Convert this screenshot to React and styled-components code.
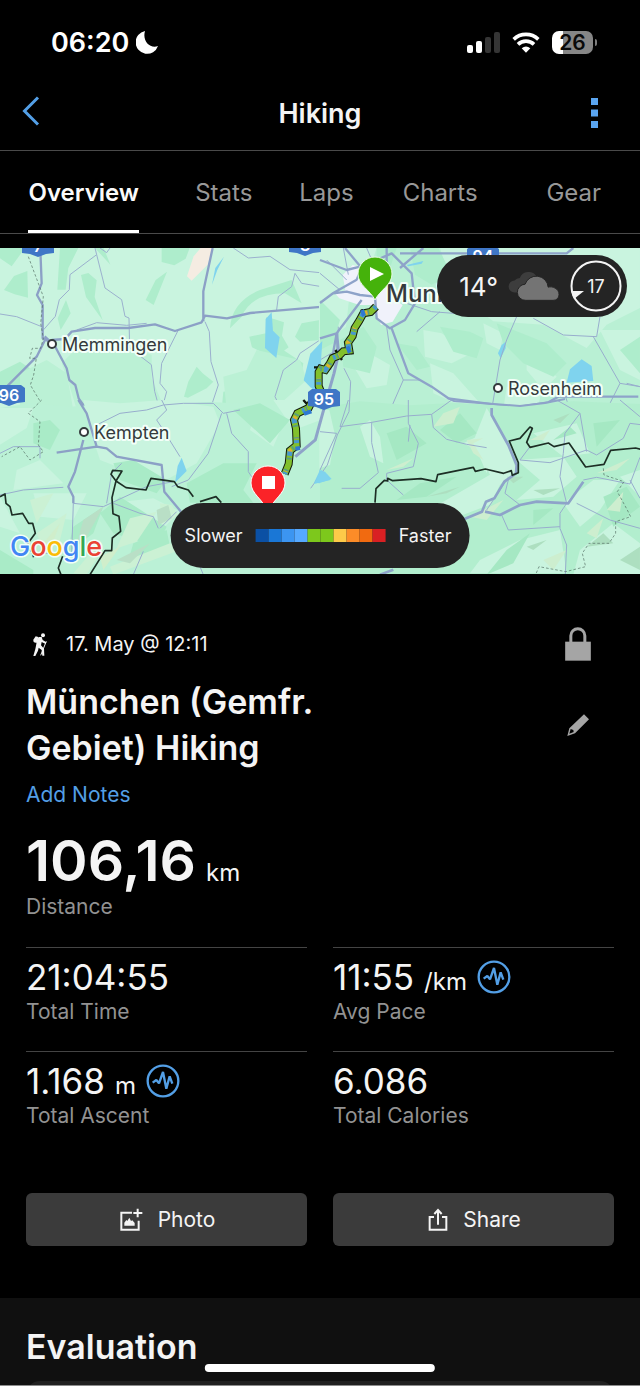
import React from "react";
import styled, { createGlobalStyle } from "styled-components";

const GlobalStyle = createGlobalStyle`
  *, *::before, *::after { box-sizing: border-box; }
  body { margin: 0; background: #000; }
  button { font: inherit; color: inherit; background: none; border: 0; padding: 0; cursor: pointer; }
  svg { display: block; }
`;

const Page = styled.div`
  position: relative;
  min-height: 100vh;
  display: flex;
  flex-direction: column;
  background: #000;
  color: #f4f4f4;
  font-family: Inter, "Liberation Sans", sans-serif;
  font-size: 20px;
`;

/* ---------- status bar and header ---------- */

const StatusBar = styled.div`
  height: 76px;
  padding: 8px 43px 0 51px;
  display: flex;
  align-items: center;
  justify-content: space-between;
`;

const StatusGroup = styled.div`
  display: flex;
  align-items: center;
  gap: ${(p) => p.$gap}px;
`;

const Clock = styled.time`
  font-size: 27px;
  font-weight: 600;
  color: #fff;
`;

const Battery = styled.div`
  display: flex;
  align-items: center;
  gap: 2px;
  &::after {
    content: "";
    width: 2px;
    height: 7px;
    border-radius: 0 2px 2px 0;
    background: #7d7d7d;
  }
`;

const BatteryLevel = styled.div`
  width: 41px;
  height: 23px;
  border-radius: 7px;
  display: grid;
  place-items: center;
  background: linear-gradient(to right, #fff 27%, #868686 27%);
  color: #0a0a0a;
  font-size: 21px;
  line-height: 23px;
  font-weight: 600;
`;

const Header = styled.header`
  height: 75px;
  padding: 0 22px;
  display: grid;
  grid-template-columns: 48px 1fr 48px;
  align-items: center;
  border-bottom: 1px solid #4a4a4a;
`;

const HeaderTitle = styled.h1`
  margin: 0;
  text-align: center;
  font-size: 27px;
  font-weight: 600;
`;

const IconButton = styled.button`
  display: flex;
  align-items: center;
  justify-content: ${(p) => (p.$end ? "flex-end" : "flex-start")};
  min-width: 32px;
  min-height: 34px;
`;

const BackButton = styled(IconButton)`
  padding-bottom: 4px;
`;

const MoreButton = styled(IconButton)`
  padding-right: 20px;
`;

const Tabs = styled.nav`
  height: 83px;
  display: grid;
  grid-template-columns: 168fr 113fr 93fr 135fr 133fr;
  justify-items: center;
  border-bottom: 1px solid #4a4a4a;
`;

const Tab = styled.button`
  height: 82px;
  font-size: 24px;
  font-weight: ${(p) => (p.$active ? 600 : 400)};
  color: ${(p) => (p.$active ? "#fafafa" : "#989898")};
  box-shadow: ${(p) => (p.$active ? "inset 0 -3px #fff" : "none")};
`;

/* ---------- map ---------- */

const MapPanel = styled.section`
  position: relative;
  margin-top: 14px;
  height: 326px;
  overflow: hidden;
  background: #bdf1d6;
`;

const MapCanvas = styled.svg`
  width: 100%;
  height: 100%;
`;

const PlaceName = styled.text`
  font-size: ${(p) => p.$size}px;
  font-weight: ${(p) => p.$weight || 400};
  fill: #343a3c;
  stroke: #f2fff8;
  stroke-width: 4px;
  stroke-linejoin: round;
  paint-order: stroke;
`;

const RoadNumber = styled.text`
  font-size: 16px;
  font-weight: 600;
  fill: #fff;
  text-anchor: middle;
`;

const GoogleMark = styled.text`
  font-family: Inter, sans-serif;
  font-size: 27px;
  font-weight: 500;
  stroke: #f2fff8;
  stroke-width: 3px;
  stroke-linejoin: round;
  paint-order: stroke;
`;

const WeatherPill = styled.div`
  position: absolute;
  top: 7px;
  right: 13px;
  height: 62px;
  padding: 0 5px 0 22px;
  display: flex;
  align-items: center;
  gap: 10px;
  border-radius: 31px;
  background: #242424;
`;

const Temperature = styled.span`
  font-size: 26px;
`;

const Wind = styled.div`
  display: grid;
  place-items: center;
  font-size: 18px;
  > * { grid-area: 1 / 1; }
`;

const PaceLegend = styled.div`
  position: absolute;
  bottom: 6px;
  left: 50%;
  transform: translateX(-50%);
  height: 65px;
  padding: 0 18px 0 14px;
  display: flex;
  align-items: center;
  gap: 13px;
  border-radius: 33px;
  background: #242424;
  font-size: 18px;
`;

const Scale = styled.div`
  display: flex;
`;

const Swatch = styled.i`
  width: 13px;
  height: 13px;
  background: ${(p) => p.$color};
`;

/* ---------- summary ---------- */

const Summary = styled.main`
  padding: 53px 26px 52px;
`;

const MetaRow = styled.div`
  height: 34px;
  display: flex;
  align-items: center;
  padding: 0 23px 0 6px;
`;

const DateText = styled.time`
  flex: 1;
  margin-left: 18px;
  font-size: 20px;
`;

const TitleRow = styled.div`
  margin-top: 18px;
  padding-right: 23px;
  display: flex;
  align-items: center;
  justify-content: space-between;
`;

const ActivityTitle = styled.h2`
  margin: 0;
  max-width: 340px;
  font-size: 34px;
  line-height: 46px;
  font-weight: 600;
`;

const NotesLink = styled.a`
  display: block;
  width: fit-content;
  margin-top: 10px;
  font-size: 21px;
  line-height: 28px;
  color: #539fe6;
  text-decoration: none;
`;

const Distance = styled.div`
  margin-top: 22px;
  margin-bottom: 26px;
`;

const DistanceValue = styled.div`
  display: flex;
  align-items: baseline;
  gap: 10px;
  height: 60px;
  font-size: 57px;
  line-height: 60px;
  font-weight: 600;
`;

const Unit = styled.span`
  font-size: 24px;
  line-height: 24px;
  font-weight: 400;
`;

const StatLabel = styled.div`
  margin-top: ${(p) => p.$gap || 1}px;
  font-size: 21px;
  line-height: 28px;
  color: #929292;
`;

const StatGrid = styled.div`
  display: grid;
  grid-template-columns: 1fr 1fr;
  column-gap: 26px;
`;

const StatCell = styled.div`
  height: 104px;
  padding-top: 9px;
  border-top: 1px solid #444;
`;

const StatLine = styled.div`
  display: flex;
  align-items: center;
  gap: 10px;
  height: 40px;
`;

const StatValue = styled.span`
  display: flex;
  align-items: baseline;
  gap: 10px;
  font-size: 35px;
  line-height: 40px;
`;

const Actions = styled.div`
  display: grid;
  grid-template-columns: 1fr 1fr;
  gap: 26px;
  margin-top: 38px;
`;

const ActionButton = styled.button`
  height: 53px;
  display: flex;
  align-items: center;
  justify-content: center;
  gap: 15px;
  padding-left: 2px;
  border-radius: 6px;
  background: #3b3b3b;
  font-size: 21px;
`;

/* ---------- evaluation ---------- */

const EvaluationSection = styled.section`
  flex: 1;
  padding: 26px 26px 0;
  background: #101010;
  border-bottom: 1px solid #8c8c8c;
`;

const SectionTitle = styled.h2`
  margin: 0 0 11px;
  font-size: 34px;
  line-height: 46px;
  font-weight: 600;
`;

const CardEdge = styled.div`
  height: 4px;
  overflow: hidden;
  &::before {
    content: "";
    display: block;
    height: 28px;
    border-radius: 14px;
    background: #202020;
  }
`;

const HomeIndicator = styled.div`
  position: absolute;
  bottom: 14px;
  left: 50%;
  transform: translateX(-50%);
  width: 36%;
  height: 8px;
  border-radius: 4px;
  background: #fff;
`;

/* ---------- icons ---------- */

const MoonIcon = () => (
  <svg width="23" height="24" viewBox="0 0 23 24">
    <path d="M9 1A11.500 11.500 0 1 0 22 16C14 19 6 11 9 1Z" fill="#fff" />
  </svg>
);

const SignalIcon = () => (
  <svg width="33" height="21" viewBox="0 0 33 21">
    <rect x="0" y="13" width="6" height="8" rx="2" fill="#fff" />
    <rect x="9" y="9" width="6" height="12" rx="2" fill="#fff" />
    <rect x="18" y="5" width="6" height="16" rx="2" fill="#353535" />
    <rect x="27" y="0" width="6" height="21" rx="2" fill="#353535" />
  </svg>
);

const WifiIcon = () => (
  <svg width="28" height="21" viewBox="0 0 84 63">
    <g fill="none" stroke="#fff" strokeWidth="11">
      <path d="M5 22A54 54 0 0 1 79 22" />
      <path d="M18 37A35 35 0 0 1 66 37" />
    </g>
    <path d="M29 49Q42 38 55 49L42 62Z" fill="#fff" />
  </svg>
);

const BackIcon = () => (
  <svg width="18" height="30" viewBox="0 0 18 30">
    <path d="M16 1.500 2.500 15 16 28.500" fill="none" stroke="#539fe6" strokeWidth="3" />
  </svg>
);

const MoreIcon = () => (
  <svg width="7" height="30" viewBox="0 0 7 30" fill="#5aa5f0">
    <rect width="7" height="7" />
    <rect y="11.500" width="7" height="7" />
    <rect y="23" width="7" height="7" />
  </svg>
);

const HikerIcon = () => (
  <svg width="16" height="24" viewBox="94 64 46 72">
    <circle cx="126" cy="74" r="6" fill="#f4f4f4" />
    <path d="M104 77l8 2-5 18-8-2q-4-3-1-9z" fill="#f4f4f4" />
    <path d="M114 79h8l3 9 11 7-2 5-12-6-2 10 9 10 1 21h-6l-2-17-9-7-2 9-8 16h-6l6-21 2-10 4-22z" fill="#f4f4f4" />
    <path d="M136 92l-17 42" stroke="#f4f4f4" strokeWidth="3" />
  </svg>
);

const LockIcon = () => (
  <svg width="26" height="34" viewBox="735 50 77 102">
    <rect x="735" y="94" width="77" height="57" fill="#a5a5a5" />
    <path d="M752 96V76a21 21 0 0 1 42 0v20" fill="none" stroke="#a5a5a5" strokeWidth="9" />
  </svg>
);

const PencilIcon = () => (
  <svg width="26" height="22" viewBox="734 309 78 66">
    <path fillRule="evenodd" d="M791 310l15 15-42 42-23 8 6-23zM751 354l-4 14 13-5-1-6z" fill="#a5a5a5" />
  </svg>
);

const PulseIcon = () => (
  <svg width="34" height="34" viewBox="-51 -51 102 102" fill="none" stroke="#539fe6">
    <circle r="46" strokeWidth="7" />
    <path d="M-31 5-20-3-12 7 0-27 10 23 20-14 28 8" strokeWidth="7" strokeLinejoin="bevel" />
  </svg>
);

const PhotoIcon = () => (
  <svg width="23" height="24" viewBox="32 471 69 72">
    <path d="M68 485H36v51h52v-27M85 473v26M72 486h27" fill="none" stroke="#f4f4f4" strokeWidth="6" />
    <path d="M45 524v-9l6-8 3 3 6-10 5 10 4-2 7 8v8z" fill="#f4f4f4" />
  </svg>
);

const ShareIcon = () => (
  <svg width="20" height="24" viewBox="0 0 60 72" fill="none" stroke="#f4f4f4" strokeWidth="6">
    <path d="M18 27H5v38h50V27H42M30 50V8M19 18 30 6l11 12" />
  </svg>
);

const CloudsIcon = () => (
  <svg width="52" height="29" viewBox="567 94 156 88">
    <path d="M586 156a18 18 0 0 1 0-36 20 20 0 0 1 16-8 28 28 0 0 1 52-1v45z" fill="#3d3d3d" />
    <path d="M620 180a24 24 0 0 1-2-49 36 36 0 0 1 70 9c12-4 33 4 33 22 0 12-8 18-18 18z" fill="#747474" stroke="#242424" strokeWidth="3" />
  </svg>
);

const WindDial = () => (
  <svg width="52" height="52" viewBox="0 0 52 52">
    <circle cx="26" cy="26" r="24.500" fill="none" stroke="#f4f4f4" strokeWidth="2" />
    <path d="M1 31h13L4 39z" fill="#f4f4f4" />
  </svg>
);

/* ---------- map artwork ---------- */

const FOREST = "#aeedcc";
const FIELD = "#c9f4df";
const WATER = "#7fd3ee";

const NorthWest = () => (
  <g transform="translate(0 -8) scale(.3333)">
    <path fill={FIELD} d="M0 0H970V540H0z" />
    <g fill={FOREST}>
      <path d="M0 24h75l-40 55L0 55zM12 150l30-42 40-15 2 80-40-10zM180 24h55l-30 60-8 65-25 0zM243 105l22-6 25 22-6 50 24 70-50-70zM173 235l25-55 14 40-30 50zM437 180l30-60 34-25-40 100zM485 24h84l-12 32-34 20-38-10zM0 395l60-30 30 20-50 90-40-20zM565 425l25-45 18 20 32 25-20 20-56 28-12-3zM748 290l50-10 0-48 24 5 30 10-6 40 20 35-40 30-30-10-40-20zM905 250l55-10v60l-60 5-15-15zM670 455l35-5 35 35 10 25h-85zM820 360l30-30 60 40-5 30zM285 24h26l20 50z" />
      <path d="M690 265q5-80 90-115l95-30 30 70-50-30q-100 0-130 70z" />
    </g>
    <path fill="#bbf1d5" d="M185 370l50-50 150-5 70 30 0 70 30 70-20 40H235l-30-100zM670 410l70-20 30-60 130 30 20 60-100 90H680zM60 400l80-40 60 40 20 110H60z" />
    <path fill="#f5ece2" d="M602 24h36l-15 50-48 48-14-13 20-60z" />
    <g fill={WATER}>
      <path d="M797 237l18-20 4 55 20 20-10 62-34-30zM930 370l30-30v130l-48-50zM672 50l-20 40-16 44 10-50z" />
    </g>
    <g fill="none" stroke="#9bb0ce" strokeWidth="3">
      <path d="M285 24l5 20-80 60-2 45-30 30-12 50-35 40M0 222l50 8 80 32M290 44l25 100 50 35 10 50 12 5 2 90 65 50 10 80 20 74M535 270l-50 100-5 60 20 25-15 55M615 245l13 30 5 90 22 70-20 60-180 12-80 20M700 24l45 30 65-5 60 40 100 10M885 100l-10 40-40 30-5 40M885 100l20 30 60 10M960 300l-60 40-10 20-40 30-25 80 20 40M300 24l20 14 10-14M230 270l60-22 90 8 60-6" />
    </g>
    <g fill="none" stroke="#8ca0c6" strokeWidth="7" strokeLinejoin="round">
      <path d="M121 30l4 100-14 35 17 30v100l28 14-22-20M135 300l-25 50-110 110M155 300l45 85 8 35 18 15 10 40 28 40M155 300l40-3 20-22 70-11h100l80-11 60 20 80-26 10-20 66 8 70-16 160-14 60-5M638 24l-28 130v90" />
    </g>
    <path d="M85 50l45 120-8 80 8 45-8 30-25 0-8 30 20 0-8 50-10 30 30 50" fill="none" stroke="#526b60" strokeWidth="2" strokeDasharray="8 6" />
  </g>
);

const NorthEast = () => (
  <g transform="translate(320 -8) scale(.3333)">
    <path fill="#b9f0d4" d="M0 0H960V540H0z" />
    <g fill={FIELD}>
      <path d="M-2 0h180l-30 90-60 80-10 90-80 60v60l-2 0zM360 24h600v180l-100 50-60 70-130-70-150-10-120-90zM80 345l60-10 70 40-10 60-60 10zM310 270l55 10 90 60-60 30-80-20zM330 370l70 30 80 90-50 10-90-40zM840 270h120v150l-60-30zM490 250l60 30-10 50-40-20zM620 320l90 90-40 40-50-60z" />
      <path d="M560 440h110l-20 70H550z" />
    </g>
    <g fill={FOREST}>
      <path d="M170 24h60l-20 60-40-20zM270 24h85l40 80-60 30-50-30zM360 260l90 15 40 20-20 60-70-20zM530 250l150 60 60 60-40 40-90-40-60-60zM750 110l60 30 0 40-80 30zM0 180l60 60-20 70-40 20zM230 310l60 10 40 60-40 10zM900 330l60-40v110zM60 300l70-40 40 60-20 80-80-20z" />
    </g>
    <path fill="#f0f2fb" d="M68 105l30-30 110 30 10 70 30 20-30 50-35 10-25-60-40 0-60-20-12-14 30-10z" />
    <g fill={WATER}>
      <path d="M785 358l30 20 5 45-80 5 10-40zM545 315l12-10 0 20-15 30-8-15zM260 75l50-12-5 8-40 8z" />
    </g>
    <g fill="none" stroke="#98adcd" strokeWidth="3">
      <path d="M200 260l10 70 40 90-35 80M250 420l50 0M590 230l-30 70-20 60-10 60-15 90M640 235l90 50 100 5 10-60M820 290l80 140 60 10M900 430l-30 60M0 100l60 50M20 60l60 60M70 24l15 80M360 215l-70 60M245 185l90 30 130 10 70-5M0 360l50-30 5-70M920 430l40 10M140 24l30 70M730 450l20 60M0 495l60 5" />
    </g>
    <g fill="none" stroke="#8ea3c9" strokeWidth="7" strokeLinejoin="round">
      <path d="M75 24l50 60-15 35-70 40-40 30M0 60l80 30 40-10M125 80l90-40 60 60 10 90-30 50-45 25-40-30-5-65-45-5-40-10-40 5M200 24l0 80M310 24l-70 60M125 180l-75 100-20 110M50 280l-50 15M215 265l50 135 70 40 50 35 90 12 110 15 100-15 30-17h240M240 40h500l20-16" />
    </g>
  </g>
);

const SouthWest = () => (
  <g transform="translate(0 152) scale(.3333)">
    <path fill="#bbf1d6" d="M0 24l90-14 120 10 130-10 150 6 140-10 160 8 170 0V540H0z" />
    <g fill={FIELD}>
      <path d="M250 0l110 10 130-10 150 20 20 50-70 120-110 60-180-70-30-90zM0 24h100l-20 60-80 50zM50 210l70-30 70 70-150 20zM760 60l90 10-30 70-70-50zM820 0h142v60l-80 30z" />
      <path d="M370 305l90-10 80 40-50 50-110-40zM100 280l160 0-40 80-100-10zM0 290l60 110-60-20z" />
    </g>
    <g fill="#a9ebc7">
      <path d="M100 70l50-10 30 30-30 60-50-20zM340 190l60-10 100 60-30 40-110-40zM560 250l110-60 100 0-40 80 30 38H570zM0 450l100 60 0 14H0zM300 340l60-50 140 90-30 60-130-40zM700 30l80-20 90 50-60 70z" />
      <path d="M220 380l90-60-30 80-80 60zM400 430l100-40 10 50-130 60z" />
    </g>
    <g fill="#cbf1d4">
      <path d="M330 500l180-70 30 20-200 74zM220 520l60-70 20 10-40 64zM480 310l35 5 20 30-50 30zM390 355l80-20-60 90-60 20zM90 300l70-20-50 90zM110 400l90-60-20 80-50 30z" />
    </g>
    <path fill="#b9dfc6" d="M470 330l35-15 10 40-40 20zM250 360l60-40-50 90-30 20zM350 480l100-50-60 60z" />
    <path fill="#d0eecb" d="M130 430l50-60-30 80zM300 470l60-30-50 70z" />
    <g fill={WATER}>
      <path d="M545 173l15 40-35 35 8-50zM960 210v40l-18-2z" />
    </g>
    <g fill="none" stroke="#98adcd" strokeWidth="3">
      <path d="M485 0l15 30-30 30 20 30 50 80M290 75l70-35 80-10 50-15 60-5 90 0 30 30 50-10M665 40l-40 120-60 80-50 20M680 40l15 60 50 55 0 60 20 30M0 285l70-15 120-8M220 310l90 10 130-60 80-15M220 310l-5 150M340 310l80 30 40 10 15 35M320 310l15-90 30-30M0 160l40-20 80 0 0 35M480 385l50-50M400 524l30-70M600 500l10 24M120 460l60 0" />
    </g>
    <g fill="none" stroke="#8ca0c6" strokeWidth="7" strokeLinejoin="round">
      <path d="M235 0l25 40 30 100-120 18M290 140l30 5 30 25 135 25 8 80 50 60M250 120l-25 95-20 45 15 30v20" />
    </g>
    <path d="M125 0l-40 40 35 25-5 70 15 20-40 25-30-40-55 30" fill="none" stroke="#526b60" strokeWidth="2" strokeDasharray="8 6" />
    <g fill="none" stroke="#1d2e25" strokeWidth="5" strokeLinejoin="round">
      <path d="M0 290l15-8 3 28 12 10 6 25 32-5 18 30 12 0 8 30-30 40 20 15 5 17M183 524l-8-20 13-35M270 524l45-72 20 0 2-38 25-20-5-45-18-8-3-48 12-50-15-20 5-12 28 2-18 30 30 20 60 7 15-35 70 10 10 15 32 10 15 20M600 305l48-15 16 18" />
    </g>
  </g>
);

const SouthEast = () => (
  <g transform="translate(320 152) scale(.3333)">
    <path fill="#b2eece" d="M0 24l120-20 150 12 140-8 160 10 190-14 200 8V540H0z" />
    <g fill={FIELD}>
      <path d="M-2 30l30 0 17 75-15 90-32 10zM120 80l30-20 30 50 10 80-40-20zM430 130l40-20 50 50-20 60-30-70zM500 24l60 100 30 90-50 40-30 60-80 30-110-10 190-110-50-100zM590 180l140-10 40 60-70 60-110 10 70-60zM730 310l90-70 80 0-60 90-60 50zM640 100l130-30 40 90-80 10z" />
      <path d="M480 480l120-60 120-30 20 130H450zM780 450l100-80 80 60v94H760zM900 230l60-20v80z" />
    </g>
    <g fill="#a5e8c3">
      <path d="M200 100l60-20 60 50-90 50zM360 90l60-50 50 60-60 30zM300 250l110-20-90 60-90 10zM560 450l70-50-50 90-80 34zM820 70l80-10-70 80zM640 330l60-5-60 50zM850 290l70-30 40 60-80 60zM700 120l50-40 20 20z" />
    </g>
    <g fill="#cdeecf">
      <path d="M370 40l50-20-20 50-60 10zM200 210l80-35-30 25zM440 120l50-5-30 15 30 50-30-20zM630 120l60-30-20 30zM830 220l100-45-40 35zM860 330l50-55-10 60zM800 400l50-45-20 60zM670 480l70-30-40 60zM450 350l100-50-50 60z" />
    </g>
    <g fill="#addfc0">
      <path d="M320 290l100-30-40 20zM640 270l80-5-50 20zM560 230l50 0-30 20zM700 60l50-20-30 30zM800 440l50-40 30 30zM900 480l60-40v70zM620 440l60-20-40 30z" />
    </g>
    <path fill={WATER} d="M-2 210l17 5 20 22-37 12z" />
    <g fill="none" stroke="#98adcd" strokeWidth="3">
      <path d="M0 95l50 5L0 210M85 0L60 80l90-12 110-20 75-5 60-43M155 68l0 60 20 90-55 47H65M265 0v70l30 60-15 70-80 20 0 20 50 45M270 75l-5 50M335 43l5 40 40 35 60 15 60 10M630 140l-30 40 90 8 110-38 30 15 80-50 20-45 40 5M780 40l-45 60 -5 60-10 70 20 80-20 30 0 45 20 50-5 110M710 0l70 40 20 115M565 240l-10 40 45 35M770 310l100 50 90 25M545 345l20 45 155-10M790 240l40-8 100 20 30-80M900 0l60 50M500 330l60-90M930 240l30 55" />
    </g>
    <g fill="none" stroke="#8ea3c9" strokeWidth="8" strokeLinejoin="round">
      <path d="M515 24l0 21 50 90 25 60-2 25-35 25-30 50-25 10-12 30-60 25M495 335l45 10 60-30 50-10 95 5 45-65M180 524l40-15" />
    </g>
    <path d="M850 205l2 20 60 20-20 30 30 55 10 20-45 15 0 35-20 30-60 0-20 30 10 40-60 15-80-15-10 24-50 0" fill="none" stroke="#526b60" strokeWidth="2" strokeDasharray="8 6" />
    <path d="M165 308l3-42 25-25 10 2 0-8 15 7 85-6 45 9 5-21 107-22 6 12 30-7 55 13 23-8 3 14 18-8 0-30-27-65 32-8 30-34 7 4-17 42 10 15 55-13 17 11 45-11 50 72 55-8 20-42 75-7 30 8" fill="none" stroke="#1d2e25" strokeWidth="5" strokeLinejoin="round" />
  </g>
);

const TRACK =
  "M318 50l-16 16-22 4-12 22-14 22-6 24-14 20 4 24-18 2-12 12-20 8-8 16-14 20-14-4-6 10 0 42 8 20-26 22-12 24-34 16-10 20 6 26 2 50-20 16-4 40-12 30";

const Route = () => (
  <g transform="translate(270 42) scale(.3333)" fill="none">
    <path d="M222 235l20 40-5 90-35 70-30 90-50 70" stroke="#98adcd" strokeWidth="3" />
    <path d="M157 153l-6 90-28 50-22-22 20-80z" fill={WATER} />
    <path d="M200 130l6 60-14 60-34 120-22 80-60 50" stroke="#8ea3c9" strokeWidth="9" />
    <path d="M155 540l26 30-50 12z" fill={WATER} />
    <g strokeLinejoin="miter">
      <path d={TRACK} stroke="#11180d" strokeWidth="24" />
      <path d="M275 58l8 24M225 185l22 4M196 180l20 30M132 232l22 0M100 330l18 20M60 480l30-4" stroke="#11180d" strokeWidth="7" />
      <path d={TRACK} stroke="#82c02d" strokeWidth="18" />
      <path d={TRACK} stroke="#4798d0" strokeWidth="15" strokeDasharray="9 33 15 51" />
      <path d={TRACK} stroke="#dfb02f" strokeWidth="12" strokeDasharray="5 39 8 57" strokeDashoffset="13" />
      <path d={TRACK} stroke="#579c85" strokeWidth="15" strokeDasharray="5 31" strokeDashoffset="9" />
      <path d="M276 60l6 18M232 170l8 18M102 372l22-8M76 476l14-2" stroke="#2f79d2" strokeWidth="12" />
    </g>
  </g>
);

const Shield = ({ x, y, label }) => (
  <g transform={`translate(${x} ${y})`}>
    <path d="M-12-10H12L16-7V7L8 8 0 11-8 8-16 7V-7z" fill="#3f76c6" />
    <RoadNumber y="6">{label}</RoadNumber>
  </g>
);

const Town = ({ x, y, name }) => (
  <g>
    <circle cx={x} cy={y} r="4" fill="#fff" stroke="#343a3c" strokeWidth="2" />
    <PlaceName x={x + 10} y={y + 7} $size={18}>{name}</PlaceName>
  </g>
);

const ActivityMap = () => (
  <MapCanvas viewBox="0 0 640 326" preserveAspectRatio="xMidYMid slice" role="img" aria-label="Route map">
    <NorthWest />
    <NorthEast />
    <SouthWest />
    <SouthEast />
    <path d="M448 150l6 3 66 5 25-3 20-4" fill="none" stroke="#8ea3c9" strokeWidth="2" />
    <Route />
    <Shield x={38} y={-2} label="7" />
    <Shield x={305} y={-3} label="8" />
    <Shield x={483} y={8} label="94" />
    <Shield x={9} y={147} label="96" />
    <Shield x={324} y={151} label="95" />
    <Town x={52} y={96} name="Memmingen" />
    <Town x={84} y={184} name="Kempten" />
    <Town x={498} y={140} name="Rosenheim" />
    <PlaceName x="386" y="54" $size={24} $weight={500}>Munich</PlaceName>
    <path d="M375 52C370 42 358 37 358 26a17 17 0 0 1 34 0c0 11-12 16-17 26z" fill="#45b20b" stroke="#eafbe8" strokeWidth="1" />
    <path d="M370 19v14l14-7z" fill="#fff" />
    <path d="M268 264c-5-13-17-18-17-29a17 17 0 0 1 34 0c0 11-12 16-17 29z" fill="#fb2328" stroke="#fff" strokeWidth="1" />
    <rect x="262" y="228" width="13" height="13" fill="#fff" />
    <GoogleMark x="10" y="308">
      <tspan fill="#4285f4">G</tspan>
      <tspan fill="#ea4335">o</tspan>
      <tspan fill="#fbbc05">o</tspan>
      <tspan fill="#4285f4">g</tspan>
      <tspan fill="#34a853">l</tspan>
      <tspan fill="#ea4335">e</tspan>
    </GoogleMark>
  </MapCanvas>
);

const PACE_COLORS = [
  "#0b50a4", "#1a77d6", "#3c95f1", "#56a9ff", "#7dc81c",
  "#7dc81c", "#fdca49", "#fc8c28", "#f16a10", "#d92023",
];

const TABS = ["Overview", "Stats", "Laps", "Charts", "Gear"];

const STATS = [
  { value: "21:04:55", label: "Total Time" },
  { value: "11:55", unit: "/km", label: "Avg Pace", chart: true },
  { value: "1.168", unit: "m", label: "Total Ascent", chart: true },
  { value: "6.086", label: "Total Calories" },
];

const Stat = ({ value, unit, label, chart }) => (
  <StatCell>
    <StatLine>
      <StatValue>
        {value}
        {unit && <Unit>{unit}</Unit>}
      </StatValue>
      {chart && (
        <IconButton aria-label={`${label} chart`}>
          <PulseIcon />
        </IconButton>
      )}
    </StatLine>
    <StatLabel>{label}</StatLabel>
  </StatCell>
);

export default function App() {
  return (
    <Page>
      <GlobalStyle />
      <StatusBar>
        <StatusGroup $gap={7}>
          <Clock>06:20</Clock>
          <MoonIcon />
        </StatusGroup>
        <StatusGroup $gap={12}>
          <SignalIcon />
          <WifiIcon />
          <Battery>
            <BatteryLevel>26</BatteryLevel>
          </Battery>
        </StatusGroup>
      </StatusBar>
      <Header>
        <BackButton aria-label="Back"><BackIcon /></BackButton>
        <HeaderTitle>Hiking</HeaderTitle>
        <MoreButton $end aria-label="More options"><MoreIcon /></MoreButton>
      </Header>
      <Tabs>
        {TABS.map((name, i) => (
          <Tab key={name} $active={i === 0}>{name}</Tab>
        ))}
      </Tabs>

      <MapPanel>
        <ActivityMap />
        <WeatherPill>
          <Temperature>14°</Temperature>
          <CloudsIcon />
          <Wind>
            <WindDial />
            <span>17</span>
          </Wind>
        </WeatherPill>
        <PaceLegend>
          <span>Slower</span>
          <Scale>
            {PACE_COLORS.map((color, i) => <Swatch key={i} $color={color} />)}
          </Scale>
          <span>Faster</span>
        </PaceLegend>
      </MapPanel>

      <Summary>
        <MetaRow>
          <HikerIcon />
          <DateText>17. May @ 12:11</DateText>
          <LockIcon />
        </MetaRow>
        <TitleRow>
          <ActivityTitle>München (Gemfr. Gebiet) Hiking</ActivityTitle>
          <IconButton $end aria-label="Edit name"><PencilIcon /></IconButton>
        </TitleRow>
        <NotesLink href="#notes">Add Notes</NotesLink>
        <Distance>
          <DistanceValue>106,16<Unit>km</Unit></DistanceValue>
          <StatLabel $gap={2}>Distance</StatLabel>
        </Distance>
        <StatGrid>
          {STATS.map((stat) => <Stat key={stat.label} {...stat} />)}
        </StatGrid>
        <Actions>
          <ActionButton><PhotoIcon />Photo</ActionButton>
          <ActionButton><ShareIcon />Share</ActionButton>
        </Actions>
      </Summary>

      <EvaluationSection>
        <SectionTitle>Evaluation</SectionTitle>
        <CardEdge />
      </EvaluationSection>
      <HomeIndicator />
    </Page>
  );
}
